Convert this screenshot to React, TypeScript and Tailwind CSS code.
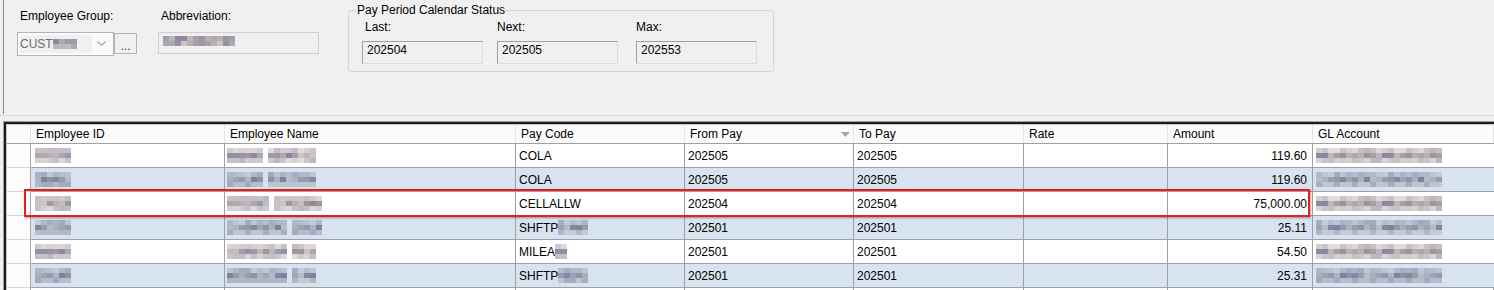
import React from 'react';

type Tone = 'w' | 'b';

const paletteW = ['#bfb5bc', '#a79eaa', '#9790a2', '#cbc4c7', '#b1a9a3', '#8d889b', '#c4bdc0', '#aca7b4', '#9e9793', '#9e99a8', '#b9b1ab'];
const paletteB = ['#a7b0c1', '#939aae', '#9da4b8', '#838aa0', '#b6bbc9', '#989cac', '#adb3c2', '#8e93a6', '#7e8399'];

// pixelated "redacted" text
function Mosaic({ w, seed, tone = 'w', rows = 3 }: { w: number; seed: number; tone?: Tone; rows?: number }) {
  const pal = tone === 'b' ? paletteB : paletteW;
  const n = Math.ceil(w / 6);
  return (
    <div className="flex flex-col shrink-0">
      {Array.from({ length: rows }).map((_, r) => (
        <div key={r} className="flex">
          {Array.from({ length: n }).map((_, c) => {
            const i = (seed * 31 + r * 17 + c * 7 + c * c * 3 + r * c) % pal.length;
            const edge = rows === 3 && r !== 1;
            return (
              <div
                key={c}
                className="w-[6px] h-[5px]"
                style={{ backgroundColor: pal[i], opacity: edge ? 0.6 : 1 }}
              />
            );
          })}
        </div>
      ))}
    </div>
  );
}

const cols = [
  { label: 'Employee ID', w: 'w-[194px]' },
  { label: 'Employee Name', w: 'w-[291px]' },
  { label: 'Pay Code', w: 'w-[169px]' },
  { label: 'From Pay', w: 'w-[169px]', sort: true },
  { label: 'To Pay', w: 'w-[170px]' },
  { label: 'Rate', w: 'w-[144px]' },
  { label: 'Amount', w: 'w-[145px]' },
  { label: 'GL Account', w: 'flex-1' },
];

const rows = [
  { name: [35, 45], code: 'COLA', codeBlur: 0, from: '202505', to: '202505', amt: '119.60' },
  { name: [35, 45], code: 'COLA', codeBlur: 0, from: '202505', to: '202505', amt: '119.60' },
  { name: [40, 48], code: 'CELLALLW', codeBlur: 0, from: '202504', to: '202504', amt: '75,000.00' },
  { name: [60, 30], code: 'SHFTP', codeBlur: 28, from: '202501', to: '202501', amt: '25.11' },
  { name: [55, 24], code: 'MILEA', codeBlur: 12, from: '202501', to: '202501', amt: '54.50' },
  { name: [55, 24], code: 'SHFTP', codeBlur: 28, from: '202501', to: '202501', amt: '25.31' },
];

function Field({ children, className = '' }: { children?: React.ReactNode; className?: string }) {
  return (
    <div className={`h-[23px] w-[121px] border border-t-[#a0a0a0] border-l-[#a0a0a0] border-r-[#dcdcdc] border-b-[#dcdcdc] bg-[#f0f0f0] pl-[4px] pt-[1px] leading-[14px] ${className}`}>
      {children}
    </div>
  );
}

export default function App() {
  return (
    <div className="relative w-[1494px] h-[290px] overflow-hidden bg-[#f0f0f0] text-[12px] text-black font-['Liberation_Sans',Arial,sans-serif]">
      {/* filter panel */}
      <div className="h-[116px] border-b border-[#dadada]">
        <div className="ml-[3px] h-[114px] border-l border-[#8a8a8a] flex items-start">
          <div className="ml-[13px] mt-[9px]">
            <div className="pl-[3px] leading-[14px]">Employee Group:</div>
            <div className="flex mt-[9px]">
              <div className="w-[97px] h-[24px] border border-[#b4b4b4] bg-[#fafafa] flex p-[2px]">
                <div className="flex-1 bg-[#f0f0f0] flex items-center text-[#6d6d6d] leading-[14px]">
                  CUST
                  <Mosaic w={24} seed={3} rows={2} />
                </div>
                <div className="w-[19px] flex items-center justify-center">
                  <svg width="9" height="6" viewBox="0 0 9 6">
                    <path d="M0.5 0.5 L4.5 4.5 L8.5 0.5" fill="none" stroke="#a8a8a8" strokeWidth="1.2" />
                  </svg>
                </div>
              </div>
              <div className="mt-[1px] w-[23px] h-[21px] border border-[#b4b4b4] bg-[#f0f0f0] flex items-end justify-center pb-[2px] text-[#333] leading-[10px]">
                ...
              </div>
            </div>
          </div>

          <div className="ml-[21px] mt-[9px]">
            <div className="pl-[3px] leading-[14px]">Abbreviation:</div>
            <div className="mt-[9px] w-[161px] h-[22px] border border-[#cfcfcf] bg-[#f0f0f0] pl-[4px] pt-[3px]">
              <Mosaic w={70} seed={5} rows={2} />
            </div>
          </div>

          <fieldset className="ml-[29px] mt-[3px] w-[426px] h-[69px] border border-[#d5d5d5] rounded-[3px]">
            <legend className="ml-[8px] leading-[14px]">Pay Period Calendar Status</legend>
            <div className="flex">
              <div className="ml-[13px]">
                <div className="mt-[3px] pl-[3px] leading-[14px]">Last:</div>
                <Field className="mt-[7px]">202504</Field>
              </div>
              <div className="ml-[14px]">
                <div className="mt-[3px] leading-[14px]">Next:</div>
                <Field className="mt-[7px]">202505</Field>
              </div>
              <div className="ml-[18px]">
                <div className="mt-[3px] leading-[14px]">Max:</div>
                <Field className="mt-[7px]">202553</Field>
              </div>
            </div>
          </fieldset>
        </div>
      </div>

      {/* grid */}
      <div className="ml-[3px] mt-[5px] border-t border-l border-[#a0a0a0]">
        <div className="border-t-2 border-l-2 border-[#1c1c1c]">
          <div className="border-t border-l border-[#c8c8c8]">
            <div className="flex h-[19px] bg-[#fbfbfb] border-b border-[#a0a0a0]">
              <div className="w-[24px] border-r border-[#e0e0e0]" />
              {cols.map((c) => (
                <div
                  key={c.label}
                  className={`${c.w} border-r border-[#e3e3e3] flex items-center justify-between pl-[5px] pr-[3px] leading-[14px]`}
                >
                  <span>{c.label}</span>
                  {c.sort && (
                    <svg width="9" height="5" viewBox="0 0 9 5">
                      <polygon points="0,0 9,0 4.5,5" fill="#a6a6a6" />
                    </svg>
                  )}
                </div>
              ))}
            </div>

            {rows.map((r, i) => {
              const blue = i % 2 === 1;
              const tone: Tone = blue ? 'b' : 'w';
              const bg = blue ? 'bg-[#d7e3f0]' : 'bg-white';
              const cell = `border-r border-b border-[#a0a0a0] flex items-center ${bg}`;
              return (
                <div key={i} className="flex h-[24px]">
                  <div className="w-[24px] bg-[#fcfcfc] border-r border-r-[#a8a8a8] border-b border-b-[#d6d6d6]" />
                  <div className={`w-[194px] pl-[4px] ${cell}`}>
                    <Mosaic w={35} seed={i * 3 + 1} tone={tone} />
                  </div>
                  <div className={`w-[291px] pl-[2px] gap-[5px] ${cell}`}>
                    <Mosaic w={r.name[0]} seed={i * 5 + 2} tone={tone} />
                    <Mosaic w={r.name[1]} seed={i * 7 + 4} tone={tone} />
                  </div>
                  <div className={`w-[169px] pl-[3px] leading-[14px] ${cell}`}>
                    {r.code}
                    {r.codeBlur > 0 && <Mosaic w={r.codeBlur} seed={i + 9} tone={tone} />}
                  </div>
                  <div className={`w-[169px] pl-[3px] leading-[14px] ${cell}`}>{r.from}</div>
                  <div className={`w-[170px] pl-[3px] leading-[14px] ${cell}`}>{r.to}</div>
                  <div className={`w-[144px] ${cell}`} />
                  <div className={`w-[145px] justify-end pr-[5px] leading-[14px] ${cell}`}>{r.amt}</div>
                  <div className={`flex-1 pl-[3px] ${bg} border-b border-[#a0a0a0] flex items-center`}>
                    <Mosaic w={125} seed={i * 11 + 6} tone={tone} />
                  </div>
                </div>
              );
            })}

            {/* next row, only its top edge is in view */}
            <div className="flex h-[24px] bg-white">
              <div className="w-[24px] bg-[#fcfcfc] border-r border-[#a8a8a8]" />
              {cols.map((c) => (
                <div key={c.label} className={`${c.w} border-r border-[#a0a0a0]`} />
              ))}
            </div>
          </div>
        </div>
      </div>

      {/* highlight annotation */}
      <div className="absolute left-[24px] top-[189px] w-[1286px] h-[28px] border-2 border-[#ec1c1c] shadow-[1px_1px_2px_rgba(0,0,0,0.35)] pointer-events-none" />
    </div>
  );
}
